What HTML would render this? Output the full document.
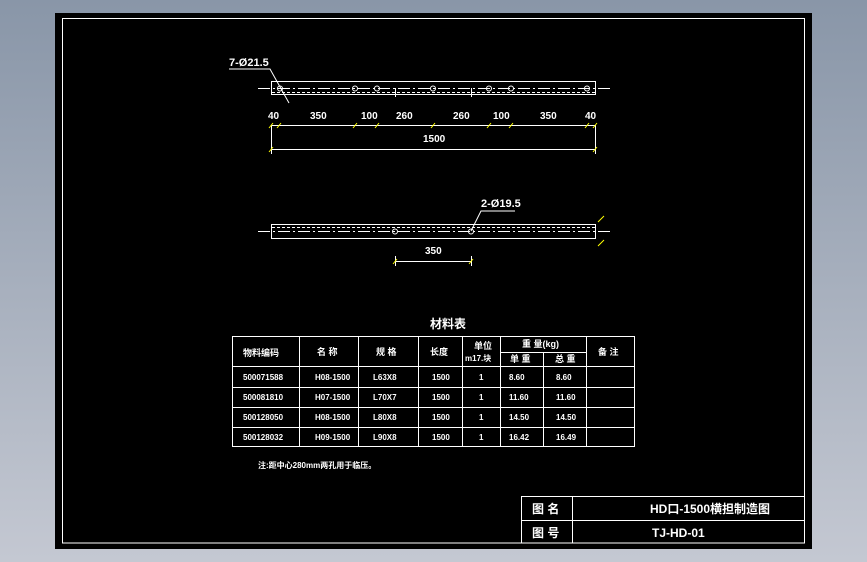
<!DOCTYPE html>
<html><head><meta charset="utf-8"><style>
html,body{margin:0;padding:0;width:867px;height:562px;overflow:hidden;background:linear-gradient(#8996a8,#c4c8d2);}
svg{position:absolute;left:0;top:0}
text{font-family:"Liberation Sans Narrow","Liberation Sans","Noto Sans CJK SC",sans-serif;fill:#fff;font-weight:bold}
</style></head><body>
<svg width="867" height="562" viewBox="0 0 867 562">
<rect x="55" y="13" width="757" height="536" fill="#000"/>
<rect x="62.5" y="18.5" width="742" height="524.5" fill="none" stroke="#fff" stroke-width="1"/>
<g stroke="#fff" stroke-width="1" fill="none">
<!-- top beam -->
<rect x="271.5" y="81.5" width="324" height="13"/>
<line x1="258" y1="88.5" x2="610" y2="88.5" stroke-dasharray="12,3,2,3"/>
<line x1="272" y1="92.5" x2="595" y2="92.5" stroke-dasharray="3,2"/>
<g>
<circle cx="280" cy="88.5" r="2.5"/><circle cx="355" cy="88.5" r="2.5"/><circle cx="377" cy="88.5" r="2.5"/><circle cx="433" cy="88.5" r="2.5"/><circle cx="489" cy="88.5" r="2.5"/><circle cx="511" cy="88.5" r="2.5"/><circle cx="587" cy="88.5" r="2.5"/>
</g>
<line x1="395.5" y1="88" x2="395.5" y2="97"/><line x1="471.5" y1="88" x2="471.5" y2="97"/>
<polyline points="229,69 270,69 289,103"/>
<!-- dims -->
<line x1="271" y1="125.5" x2="595" y2="125.5"/>
<line x1="271" y1="149.5" x2="595" y2="149.5"/>
<line x1="271.5" y1="125" x2="271.5" y2="154"/><line x1="595.5" y1="125" x2="595.5" y2="154"/>
<!-- bottom beam -->
<rect x="271.5" y="224.5" width="324" height="14"/>
<line x1="258" y1="231.5" x2="610" y2="231.5" stroke-dasharray="12,3,2,3"/>
<line x1="272" y1="227.5" x2="595" y2="227.5" stroke-dasharray="3,2"/>
<circle cx="395" cy="231.5" r="2.5"/><circle cx="471" cy="231.5" r="2.5"/>
<polyline points="515,211 481,211 471,231"/>
<line x1="395" y1="261.5" x2="471" y2="261.5"/>
<line x1="395.5" y1="256" x2="395.5" y2="266"/><line x1="471.5" y1="256" x2="471.5" y2="266"/>
<!-- table -->
<rect x="232.5" y="336.5" width="402" height="110"/>
<line x1="232" y1="366.5" x2="635" y2="366.5"/><line x1="232" y1="387.5" x2="635" y2="387.5"/><line x1="232" y1="407.5" x2="635" y2="407.5"/><line x1="232" y1="427.5" x2="635" y2="427.5"/>
<line x1="500" y1="352.5" x2="586" y2="352.5"/>
<line x1="299.5" y1="336" x2="299.5" y2="447"/><line x1="358.5" y1="336" x2="358.5" y2="447"/><line x1="418.5" y1="336" x2="418.5" y2="447"/><line x1="462.5" y1="336" x2="462.5" y2="447"/><line x1="500.5" y1="336" x2="500.5" y2="447"/><line x1="543.5" y1="352" x2="543.5" y2="447"/><line x1="586.5" y1="336" x2="586.5" y2="447"/>
<!-- title block -->
<polyline points="521.5,543 521.5,496.5 804,496.5"/>
<line x1="521" y1="520.5" x2="804" y2="520.5"/>
<line x1="572.5" y1="496" x2="572.5" y2="543"/>
</g>
<g stroke="#ff0" stroke-width="1">
<path d="M269,128l4,-5M277,128l4,-5M353,128l4,-5M375,128l4,-5M431,128l4,-5M487,128l4,-5M509,128l4,-5M585,128l4,-5M593,128l4,-5M269,152l4,-5M593,152l4,-5M393,264l4,-5M469,264l4,-5M598,222l6,-6M598,246l6,-6"/>
</g>
<g font-size="11">
<text x="229" y="66">7-Ø21.5</text>
<text x="268" y="119" font-size="10">40</text><text x="310" y="119" font-size="10">350</text><text x="361" y="119" font-size="10">100</text><text x="396" y="119" font-size="10">260</text><text x="453" y="119" font-size="10">260</text><text x="493" y="119" font-size="10">100</text><text x="540" y="119" font-size="10">350</text><text x="585" y="119" font-size="10">40</text>
<text x="423" y="142" font-size="10">1500</text>
<text x="481" y="207">2-Ø19.5</text>
<text x="425" y="254" font-size="10">350</text>
<text x="430" y="328" font-size="12">材料表</text>
</g>
<g font-size="9">
<text x="243" y="356">物料编码</text><text x="317" y="355">名 称</text><text x="376" y="355">规 格</text><text x="430" y="355">长度</text>
<text x="474" y="349">单位</text><text x="465" y="361" font-size="8">m17.块</text>
<text x="522" y="347">重 量(kg)</text><text x="510" y="362">单 重</text><text x="555" y="362">总 重</text><text x="598" y="355">备 注</text>
</g>
<g font-size="8">
<text x="243" y="380">500071588</text><text x="315" y="380">H08-1500</text><text x="373" y="380">L63X8</text><text x="432" y="380">1500</text><text x="479" y="380">1</text><text x="509" y="380">8.60</text><text x="556" y="380">8.60</text>
<text x="243" y="400">500081810</text><text x="315" y="400">H07-1500</text><text x="373" y="400">L70X7</text><text x="432" y="400">1500</text><text x="479" y="400">1</text><text x="509" y="400">11.60</text><text x="556" y="400">11.60</text>
<text x="243" y="420">500128050</text><text x="315" y="420">H08-1500</text><text x="373" y="420">L80X8</text><text x="432" y="420">1500</text><text x="479" y="420">1</text><text x="509" y="420">14.50</text><text x="556" y="420">14.50</text>
<text x="243" y="440">500128032</text><text x="315" y="440">H09-1500</text><text x="373" y="440">L90X8</text><text x="432" y="440">1500</text><text x="479" y="440">1</text><text x="509" y="440">16.42</text><text x="556" y="440">16.49</text>
<text x="258" y="468">注:距中心280mm两孔用于临压。</text>
</g>
<g font-size="12" font-weight="normal">
<text x="532" y="513">图  名</text><text x="532" y="537">图  号</text>
<text x="650" y="513">HD口-1500横担制造图</text><text x="652" y="537">TJ-HD-01</text>
</g>
</svg>
</body></html>
